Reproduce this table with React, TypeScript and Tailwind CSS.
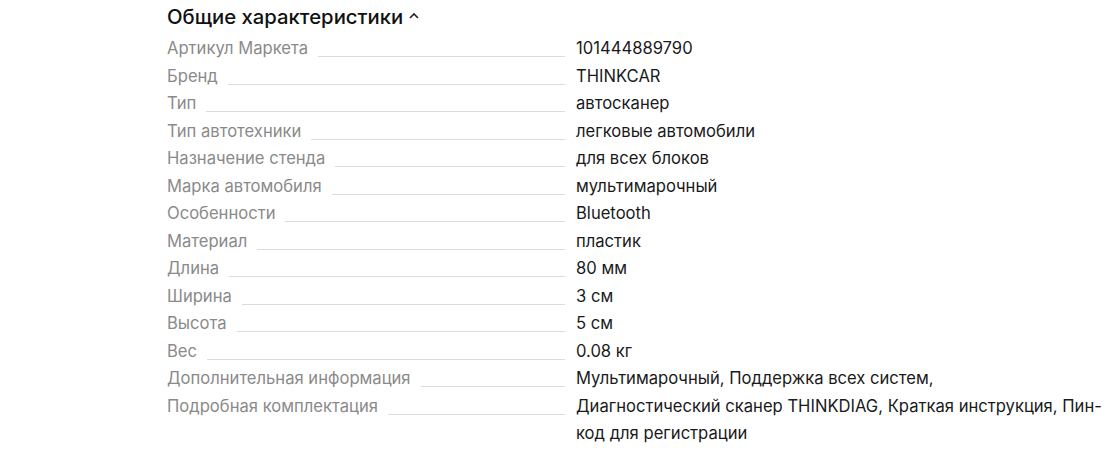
import React from "react";

const rows: [string, string][] = [
  ["Артикул Маркета", "101444889790"],
  ["Бренд", "THINKCAR"],
  ["Тип", "автосканер"],
  ["Тип автотехники", "легковые автомобили"],
  ["Назначение стенда", "для всех блоков"],
  ["Марка автомобиля", "мультимарочный"],
  ["Особенности", "Bluetooth"],
  ["Материал", "пластик"],
  ["Длина", "80 мм"],
  ["Ширина", "3 см"],
  ["Высота", "5 см"],
  ["Вес", "0.08 кг"],
  ["Дополнительная информация", "Мультимарочный, Поддержка всех систем,"],
  ["Подробная комплектация", "Диагностический сканер THINKDIAG, Краткая инструкция, Пин-код для регистрации"],
];

export default function App() {
  return (
    <div
      className="w-[1119px] h-[458px] bg-white text-[#1a1a1a]"
      style={{ fontFamily: "Inter, 'Open Sans', sans-serif" }}
    >
      <div className="ml-[167px] w-[940px] pt-[5px]">
        <div className="flex items-center gap-[6px] h-[24px] text-[20.3px] font-medium text-[#111]">
          <span>Общие характеристики</span>
          <svg width="10" height="7" viewBox="0 0 10 7" className="mt-[-4px]">
            <polyline points="1,6 5,2 9,6" fill="none" stroke="#222" strokeWidth="1.6" />
          </svg>
        </div>
        <div className="mt-[6px] text-[16.6px] leading-[27.5px]">
          {rows.map(([k, v]) => (
            <div key={k} className="flex">
              <div className="w-[398px] shrink-0 flex items-baseline">
                <span className="text-[#8a8a8a] whitespace-nowrap">{k}</span>
                <span className="flex-1 ml-[10px] border-b border-[#dcdcdc] relative top-[3px]"></span>
              </div>
              <div className="ml-[11px] w-[530px]">{v}</div>
            </div>
          ))}
        </div>
      </div>
    </div>
  );
}
